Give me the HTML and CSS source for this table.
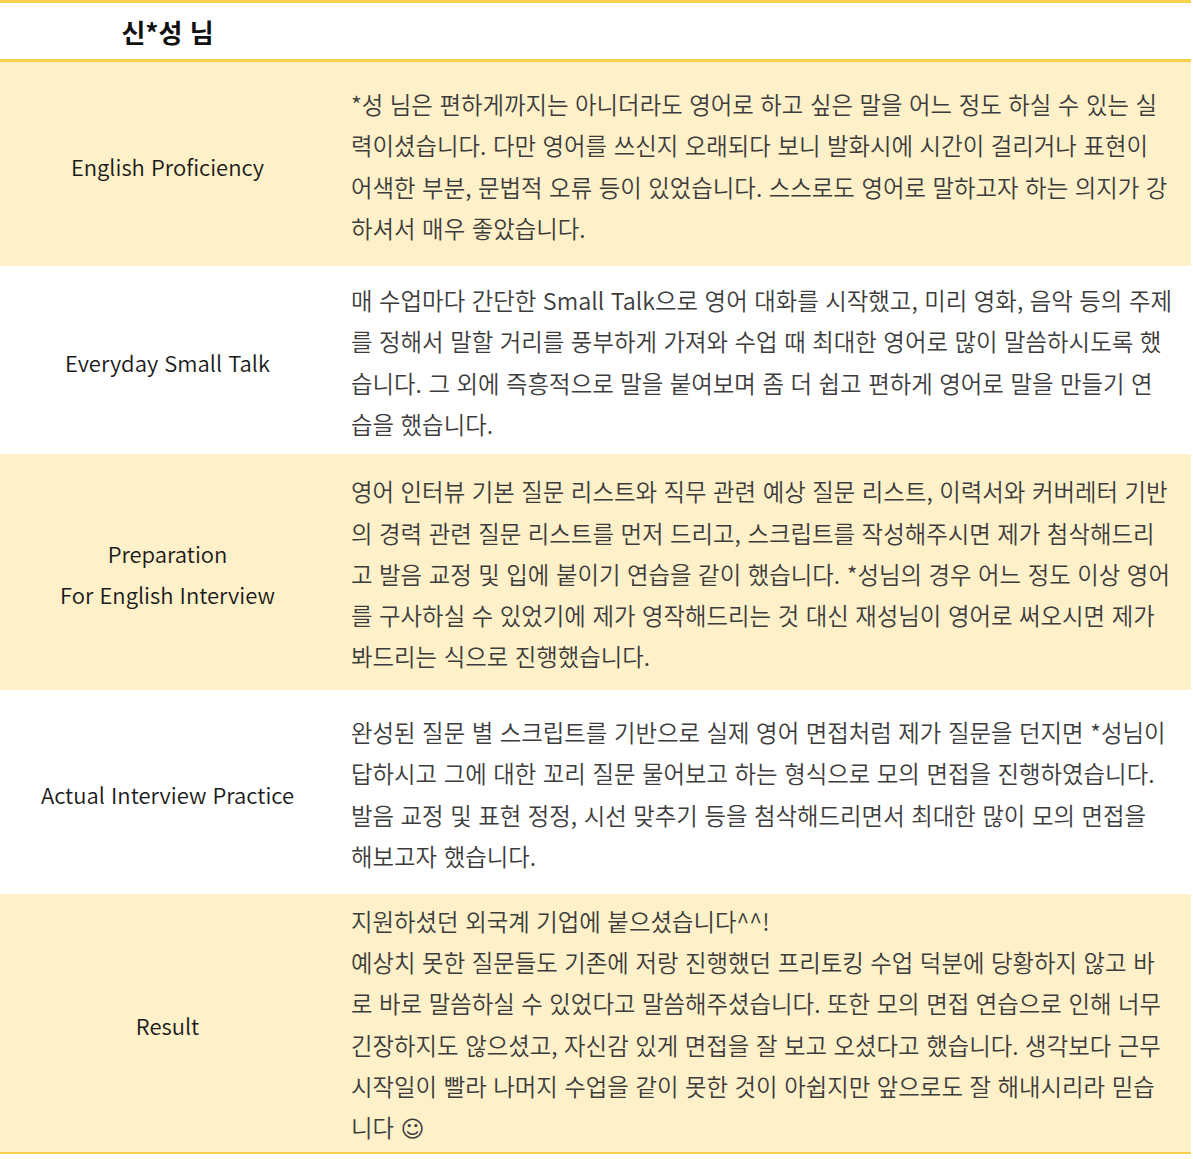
FILE: index.html
```html
<!DOCTYPE html>
<html lang="ko">
<head>
<meta charset="utf-8">
<link rel="stylesheet" href="styles.css">
</head>
<body>
<div class="table">
  <div class="row head">
    <div class="label name">신*성 님</div>
    <div class="desc"></div>
  </div>
  <div class="row tint r1">
    <div class="label">English Proficiency</div>
    <div class="desc">*성 님은 편하게까지는 아니더라도 영어로 하고 싶은 말을 어느 정도 하실 수 있는 실<br>력이셨습니다. 다만 영어를 쓰신지 오래되다 보니 발화시에 시간이 걸리거나 표현이<br>어색한 부분, 문법적 오류 등이 있었습니다. 스스로도 영어로 말하고자 하는 의지가 강<br>하셔서 매우 좋았습니다.</div>
  </div>
  <div class="row r2">
    <div class="label">Everyday Small Talk</div>
    <div class="desc">매 수업마다 간단한 Small Talk으로 영어 대화를 시작했고, 미리 영화, 음악 등의 주제<br>를 정해서 말할 거리를 풍부하게 가져와 수업 때 최대한 영어로 많이 말씀하시도록 했<br>습니다. 그 외에 즉흥적으로 말을 붙여보며 좀 더 쉽고 편하게 영어로 말을 만들기 연<br>습을 했습니다.</div>
  </div>
  <div class="row tint r3">
    <div class="label">Preparation<br>For English Interview</div>
    <div class="desc">영어 인터뷰 기본 질문 리스트와 직무 관련 예상 질문 리스트, 이력서와 커버레터 기반<br>의 경력 관련 질문 리스트를 먼저 드리고, 스크립트를 작성해주시면 제가 첨삭해드리<br>고 발음 교정 및 입에 붙이기 연습을 같이 했습니다. *성님의 경우 어느 정도 이상 영어<br>를 구사하실 수 있었기에 제가 영작해드리는 것 대신 재성님이 영어로 써오시면 제가<br>봐드리는 식으로 진행했습니다.</div>
  </div>
  <div class="row r4">
    <div class="label">Actual Interview Practice</div>
    <div class="desc">완성된 질문 별 스크립트를 기반으로 실제 영어 면접처럼 제가 질문을 던지면 *성님이<br>답하시고 그에 대한 꼬리 질문 물어보고 하는 형식으로 모의 면접을 진행하였습니다.<br>발음 교정 및 표현 정정, 시선 맞추기 등을 첨삭해드리면서 최대한 많이 모의 면접을<br>해보고자 했습니다.</div>
  </div>
  <div class="row tint r5">
    <div class="label">Result</div>
    <div class="desc">지원하셨던 외국계 기업에 붙으셨습니다^^!<br>예상치 못한 질문들도 기존에 저랑 진행했던 프리토킹 수업 덕분에 당황하지 않고 바<br>로 바로 말씀하실 수 있었다고 말씀해주셨습니다. 또한 모의 면접 연습으로 인해 너무<br>긴장하지도 않으셨고, 자신감 있게 면접을 잘 보고 오셨다고 했습니다. 생각보다 근무<br>시작일이 빨라 나머지 수업을 같이 못한 것이 아쉽지만 앞으로도 잘 해내시리라 믿습<br>니다 <span class="smile">☺</span></div>
  </div>
</div>
</body>
</html>
```
FILE: styles.css
```css
html, body {
  margin: 0;
  padding: 0;
  background: #ffffff;
}
body {
  font-family: "Noto Sans CJK KR", "Noto Sans", sans-serif;
}
.table {
  width: 1191px;
  border-top: 3px solid #f6cf4b;
  border-bottom: 2px solid #f6cf4b;
}
.row {
  display: grid;
  grid-template-columns: 335px 1fr;
  align-items: center;
}
.head {
  height: 56px;
  border-bottom: 3px solid #f6cf4b;
}
.tint { background: #fef0c8; }
.r1 { height: 204px; }
.r2 { height: 188px; }
.r3 { height: 236px; }
.r4 { height: 204px; }
.r5 { height: 258px; }
.label {
  text-align: center;
  font-size: 22px;
  font-weight: 350;
  line-height: 41px;
  color: #1a1a1a;
  padding-top: 4px;
}
.name {
  font-weight: 700;
  font-size: 26px;
  color: #111;
  padding-top: 0;
}
.desc {
  padding: 5px 0 0 16px;
  font-size: 23.4px;
  font-weight: 350;
  line-height: 41.3px;
  color: #3c3c3c;
  white-space: nowrap;
}
.smile {
  font-family: "DejaVu Sans", sans-serif;
  font-weight: 400;
  font-size: 23px;
}
```
